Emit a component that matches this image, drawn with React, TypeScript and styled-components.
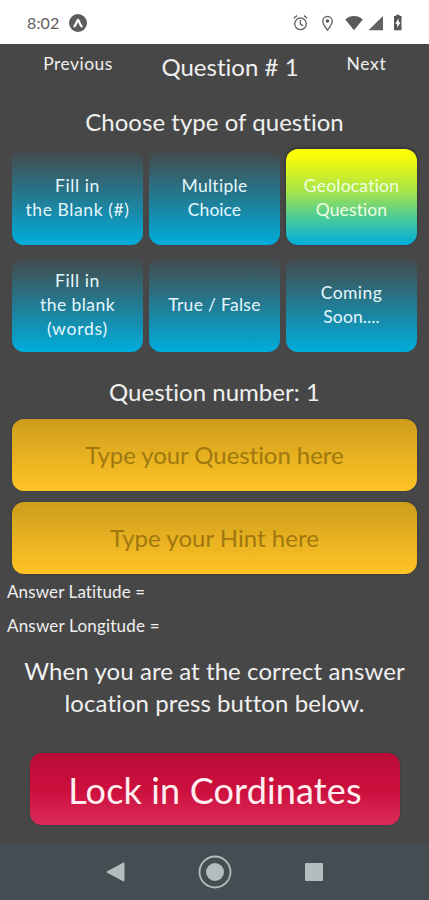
import React from "react";
import styled, { createGlobalStyle } from "styled-components";

const GlobalStyle = createGlobalStyle`
  * { box-sizing: border-box; }
  body { margin: 0; background: #474747; font-family: Lato, "Open Sans", sans-serif; }
  button { border: 0; padding: 0; background: none; font: inherit; color: inherit; }
`;

const Screen = styled.div`
  display: flex;
  flex-direction: column;
  height: 900px;
  overflow: hidden;
  background: #474747;
  color: #f0f0f0;
`;

const StatusBar = styled.header`
  display: flex;
  align-items: center;
  height: 44px;
  padding: 1px 24px 0 27px;
  background: #fff;
  color: #606060;
`;

const Clock = styled.span`
  width: 42px;
  font-size: 16px;
  line-height: 24px;
  letter-spacing: 0.15px;
`;

const StatusIcons = styled.div`
  display: flex;
  align-items: center;
  margin-left: auto;
`;

const Content = styled.main`
  display: flex;
  flex-direction: column;
  height: 800px;
`;

const TopNav = styled.nav`
  display: grid;
  grid-template-columns: 156px 148px 125px;
  justify-items: center;
  align-items: start;
  height: 62px;
  padding-top: 7px;
`;

const NavLink = styled.button<{ $track: number }>`
  padding-top: 1px;
  font-size: 17.5px;
  line-height: 24px;
  letter-spacing: ${(p) => p.$track}px;
`;

const Title = styled.h1`
  margin: 0;
  font-size: 24px;
  font-weight: 400;
  line-height: 32px;
  letter-spacing: 0.02px;
  white-space: nowrap;
`;

const Heading = styled.h2`
  margin: 0;
  font-size: 24px;
  font-weight: 400;
  line-height: 32px;
  letter-spacing: 0.03px;
  text-align: center;
  height: 43px;
`;

const TypeGrid = styled.div`
  display: grid;
  grid-template-columns: repeat(3, 131px);
  grid-template-rows: repeat(2, 95.5px);
  gap: 11.5px 6px;
  margin: 0 0 24.5px 12px;
`;

const TypeCard = styled.button<{ $active?: boolean }>`
  display: flex;
  flex-direction: column;
  align-items: center;
  justify-content: center;
  padding-top: 3px;
  border-radius: 12px;
  background: linear-gradient(${(p) => (p.$active ? "#ffff00, #f4fb0c 10%, #a4e34c 45%, #50cc94 70%, #00addc" : "#474747, #00addc")});
  box-shadow: ${(p) => (p.$active ? "0 -1px 3px rgba(20, 20, 30, 0.55)" : "none")};
  color: ${(p) => (p.$active ? "#f0ffe0" : "#e4f7fc")};
  font-size: 17.5px;
  line-height: 24px;
`;

const CardLine = styled.span<{ $track: number }>`
  letter-spacing: ${(p) => p.$track}px;
  white-space: nowrap;
`;

const Field = styled.input<{ $track: number }>`
  width: 405px;
  height: 71.5px;
  margin: 0 0 11.5px 12px;
  padding: 0 0 1px;
  border: 0;
  border-radius: 12px;
  outline: 0;
  background: linear-gradient(#cd9d1c, #ffc425);
  box-shadow: 0 0 2px rgba(30, 35, 55, 0.5);
  font: 24px/32px Lato, "Open Sans", sans-serif;
  letter-spacing: ${(p) => p.$track}px;
  text-align: center;

  &::placeholder {
    color: #a0780f;
    opacity: 1;
  }
`;

const Answers = styled.section`
  display: flex;
  flex-direction: column;
  gap: 10px;
  margin-top: -5.5px;
  padding-left: 7px;
`;

const Answer = styled.p<{ $track: number }>`
  margin: 0;
  font-size: 17px;
  line-height: 24px;
  letter-spacing: ${(p) => p.$track}px;
`;

const Instruction = styled.p`
  margin: 17.5px 0 0;
  font-size: 24px;
  line-height: 32px;
  letter-spacing: 0.08px;
  text-align: center;
`;

const LockButton = styled.button`
  width: 370px;
  height: 72px;
  margin: 34px 0 0 30px;
  padding-top: 2px;
  border-radius: 12px;
  background: linear-gradient(#ba0c38, #cc0f3d 50%, #da2a58);
  box-shadow: 0 0 2px rgba(30, 30, 40, 0.4);
  color: #ffeef0;
  font-size: 36px;
  line-height: 44px;
  letter-spacing: 0.15px;
`;

const SystemNav = styled.footer`
  display: grid;
  grid-template-columns: repeat(3, 99px);
  justify-content: center;
  justify-items: center;
  align-items: center;
  height: 56px;
  background: #454d52;
`;

const types: { lines: [string, number][]; active?: boolean }[] = [
  { lines: [["Fill in", 0.6], ["the Blank (#)", 0.6]] },
  { lines: [["Multiple", 0.3], ["Choice", 0.05]] },
  { lines: [["Geolocation", 0.22], ["Question", 0.1]], active: true },
  { lines: [["Fill in", 0.6], ["the blank", 0.45], ["(words)", 0.8]] },
  { lines: [["True / False", 0.3]] },
  { lines: [["Coming", 0.4], ["Soon....", 0.1]] },
];

const AppBadge = () => (
  <svg width="18" height="18" viewBox="0 0 18 18">
    <circle cx="9" cy="9" r="9" fill="#5c5c5c" />
    <path d="M5.500 12.300C7 10.500 7.800 7.300 9 5.800c1.200 1.500 2 4.700 3.500 6.500" fill="none" stroke="#fff" strokeWidth="2.200" strokeLinecap="round" strokeLinejoin="round" />
  </svg>
);

const SystemIcons = () => (
  <svg width="112" height="18" viewBox="0 0 112 18">
    <g fill="none" stroke="#666" strokeWidth="1.4">
      <circle cx="7.5" cy="9.8" r="5.8" />
      <path d="M7.4 6v4.1l2.7 1.7M.8 4.3 4 1.6M14.2 4.3 11 1.6" />
      <path d="M34.5 16.1c-2.7-3.5-4.7-6.1-4.7-8.9a4.7 4.7 0 0 1 9.4 0c0 2.8-2 5.4-4.7 8.9z" />
    </g>
    <circle cx="34.5" cy="7" r="1.8" fill="#555" />
    <path d="M52.3 5.4C57.4.9 64.7.9 69.8 5.4L61 16.2z" fill="#5a5a5a" />
    <path d="M75.5 16.2 90 2v14.2z" fill="#626262" />
    <path d="M101 2h2V.8h3.500V2h2v14.200H101z" fill="#555" />
    <path d="M105.600 4.200v4h2l-3.400 5.600V9.800h-2z" fill="#fff" />
  </svg>
);

export default function App() {
  return (
    <>
      <GlobalStyle />
      <Screen>
        <StatusBar>
          <Clock>8:02</Clock>
          <AppBadge />
          <StatusIcons>
            <SystemIcons />
          </StatusIcons>
        </StatusBar>
        <Content>
          <TopNav>
            <NavLink $track={0.45}>Previous</NavLink>
            <Title>Question # 1</Title>
            <NavLink $track={0.7}>Next</NavLink>
          </TopNav>
          <Heading>Choose type of question</Heading>
          <TypeGrid>
            {types.map((t, i) => (
              <TypeCard key={i} $active={t.active}>
                {t.lines.map(([text, track]) => (
                  <CardLine key={text} $track={track}>{text}</CardLine>
                ))}
              </TypeCard>
            ))}
          </TypeGrid>
          <Heading>Question number: 1</Heading>
          <Field $track={-0.06} placeholder="Type your Question here" />
          <Field $track={0.02} placeholder="Type your Hint here" />
          <Answers>
            <Answer $track={0.12}>Answer Latitude =</Answer>
            <Answer $track={0.2}>Answer Longitude =</Answer>
          </Answers>
          <Instruction>
            When you are at the correct answer
            <br />
            location press button below.
          </Instruction>
          <LockButton>Lock in Cordinates</LockButton>
        </Content>
        <SystemNav>
          <svg width="20" height="20" viewBox="0 0 20 20">
            <path d="M.8 10 18 .8v18.4z" fill="#b4bcbd" stroke="#b4bcbd" strokeLinejoin="round" />
          </svg>
          <svg width="34" height="34" viewBox="0 0 34 34">
            <circle cx="17" cy="17" r="15.5" fill="none" stroke="#b4bcbd" strokeWidth="1.8" />
            <circle cx="17" cy="17" r="9" fill="#b4bcbd" />
          </svg>
          <svg width="18" height="18" viewBox="0 0 18 18">
            <rect width="18" height="18" rx="1" fill="#b4bcbd" />
          </svg>
        </SystemNav>
      </Screen>
    </>
  );
}
